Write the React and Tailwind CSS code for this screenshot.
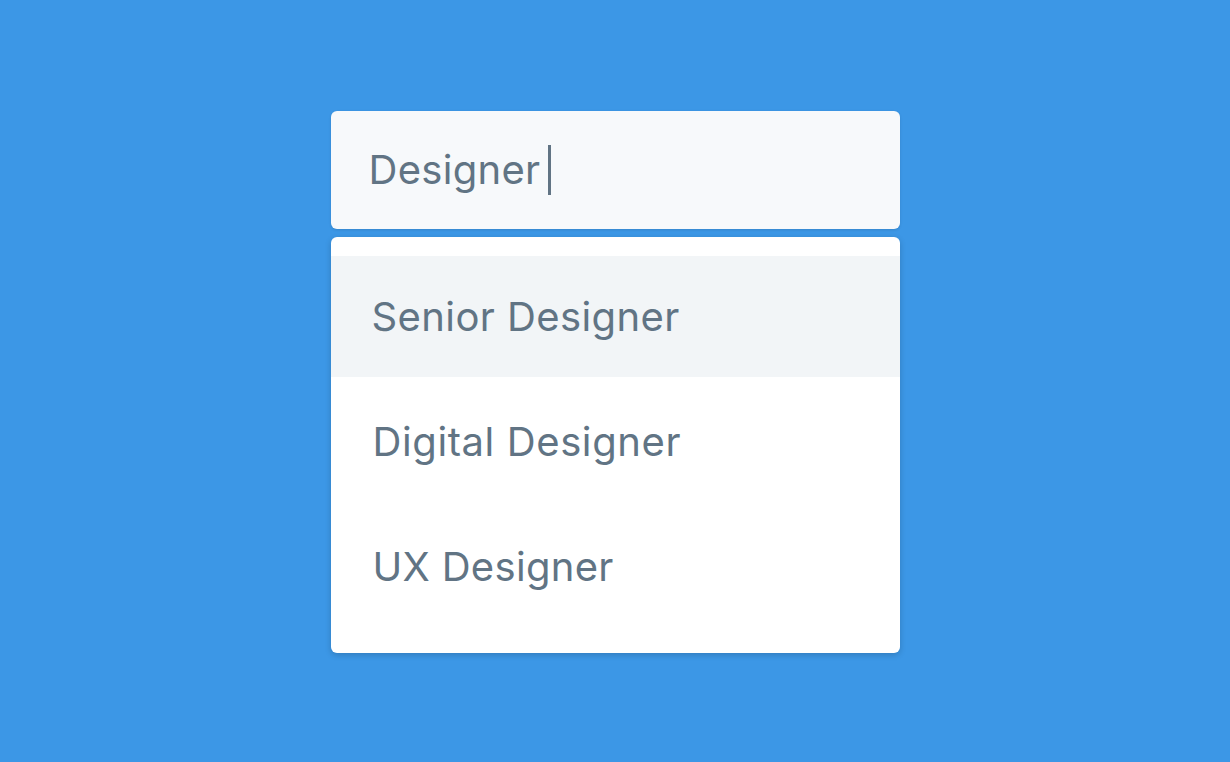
export default function App() {
  const font = { fontFamily: 'Inter, "Open Sans", sans-serif' };
  return (
    <div className="w-[1230px] h-[762px] bg-[#3c97e6] flex items-center justify-center" style={font}>
      <div className="w-[569px] mt-[2px] flex flex-col gap-[8px]">
        <div className="h-[118px] rounded-[6px] bg-[#f7f9fb] flex items-center pl-[38px] shadow-[0_1px_3px_rgba(0,0,0,0.12)]">
          <span className="text-[40px] leading-none text-[#617484] tracking-[0.3px]">Designer</span>
          <span className="ml-[8px] w-[3px] h-[50px] bg-[#617484]"></span>
        </div>
        <div className="h-[416px] rounded-[6px] bg-white pt-[19px] flex flex-col gap-[4px] shadow-[0_2px_6px_rgba(0,0,0,0.18)]">
          <div className="h-[121px] bg-[#f2f5f7] flex items-center pl-[41px]">
            <span className="text-[40px] leading-none text-[#617484] tracking-[0.4px]">Senior Designer</span>
          </div>
          <div className="h-[121px] flex items-center pl-[42px]">
            <span className="text-[40px] leading-none text-[#617484] tracking-[0.6px]">Digital Designer</span>
          </div>
          <div className="h-[121px] flex items-center pl-[42px]">
            <span className="text-[40px] leading-none text-[#617484] tracking-[0.3px]">UX Designer</span>
          </div>
        </div>
      </div>
    </div>
  );
}
